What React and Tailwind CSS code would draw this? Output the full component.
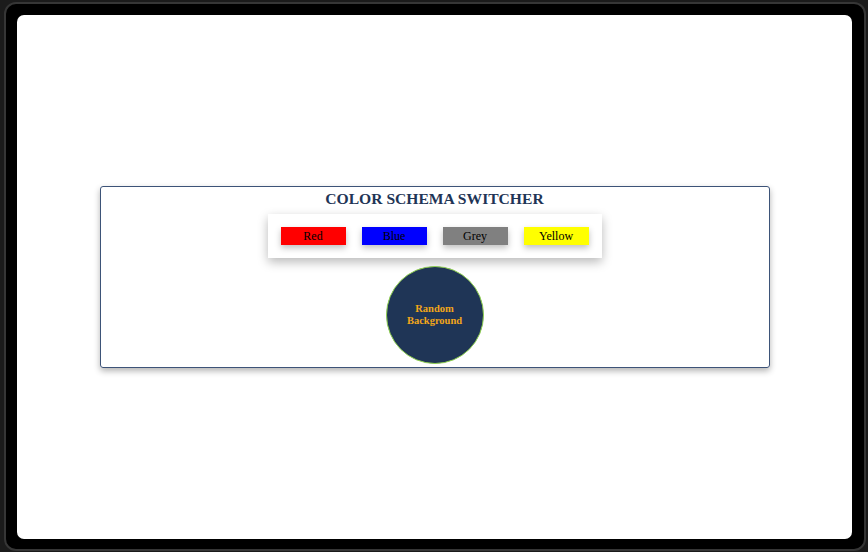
export default function App() {
  return (
    <div className="w-[868px] h-[552px] bg-[#1b1b1b] relative overflow-hidden" style={{ fontFamily: '"Liberation Serif", "Times New Roman", serif' }}>
      <div className="absolute left-[4px] top-[2px] w-[862px] h-[549px] rounded-[12px] border-2 border-[#363636] bg-black flex pl-[11px] pt-[11px] pr-[12px] pb-[10px]">
        <div className="flex-1 bg-white rounded-[7px] flex items-center justify-center">
          <div className="w-[670px] h-[182px] border border-[#3d5378] rounded-[3px] shadow-[0_3px_6px_rgba(0,0,0,0.3)] flex flex-col items-center pt-[2px]">
            <h1 className="text-[15.6px] leading-[20px] font-bold text-[#1f3556]">COLOR SCHEMA SWITCHER</h1>
            <div className="mt-[5px] w-[334px] h-[44px] bg-white shadow-[0_4px_10px_rgba(0,0,0,0.28)] flex items-center justify-center gap-[16px]">
              <button className="w-[65px] h-[18px] bg-[#ff0000] text-black text-[12px] leading-none shadow-[0_3px_6px_rgba(0,0,0,0.25)]">Red</button>
              <button className="w-[65px] h-[18px] bg-[#0000ff] text-black text-[12px] leading-none shadow-[0_3px_6px_rgba(0,0,0,0.25)]">Blue</button>
              <button className="w-[65px] h-[18px] bg-[#808080] text-black text-[12px] leading-none shadow-[0_3px_6px_rgba(0,0,0,0.25)]">Grey</button>
              <button className="w-[65px] h-[18px] bg-[#ffff00] text-black text-[12px] leading-none shadow-[0_3px_6px_rgba(0,0,0,0.25)]">Yellow</button>
            </div>
            <div className="mt-[8px] w-[98px] h-[98px] rounded-full bg-[#1f3556] border border-[#8fd14f] flex items-center justify-center text-center text-[10.5px] leading-[12px] font-bold text-[#f2a619]">
              Random<br />Background
            </div>
          </div>
        </div>
      </div>
    </div>
  );
}
